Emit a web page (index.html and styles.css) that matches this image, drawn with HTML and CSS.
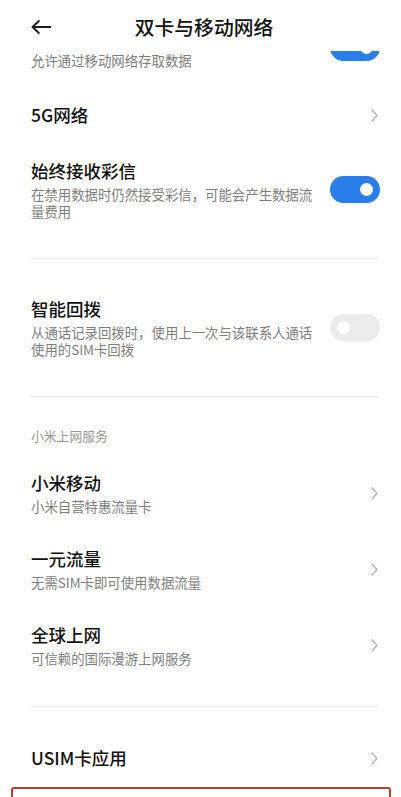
FILE: index.html
```html
<!DOCTYPE html>
<html lang="zh-CN">
<head>
<meta charset="utf-8">
<title>双卡与移动网络</title>
<link rel="stylesheet" href="styles.css">
</head>
<body>
<div class="screen">
  <header class="appbar">
    <span class="back">
      <svg width="20" height="14" viewBox="0 0 20 14" aria-hidden="true"><path d="M1.5 7 H19.5 M7.8 1 L1.5 7 L7.8 13" fill="none" stroke="#1c1c1c" stroke-width="1.9" stroke-linecap="round" stroke-linejoin="round"/></svg>
    </span>
    <h1 class="title">双卡与移动网络</h1>
  </header>
  <main class="list">
    <div class="row row-switch row-first">
      <div class="text"><div class="t">移动数据</div><div class="s">允许通过移动网络存取数据</div></div>
      <span class="switch on"><span class="knob"></span></span>
    </div>
    <div class="row row-nav">
      <div class="text"><div class="t">5G网络</div></div>
      <svg class="chev" width="7" height="13" viewBox="0 0 7 13" aria-hidden="true"><path d="M1 1 L6 6.5 L1 12" fill="none" stroke="#b3b3b3" stroke-width="1.3" stroke-linecap="round" stroke-linejoin="round"/></svg>
    </div>
    <div class="row row-switch">
      <div class="text"><div class="t">始终接收彩信</div><div class="s">在禁用数据时仍然接受彩信，可能会产生数据流<br>量费用</div></div>
      <span class="switch on"><span class="knob"></span></span>
    </div>
    <div class="divider"></div>
    <div class="row row-switch">
      <div class="text"><div class="t">智能回拨</div><div class="s">从通话记录回拨时，使用上一次与该联系人通话<br>使用的SIM卡回拨</div></div>
      <span class="switch off"><span class="knob"></span></span>
    </div>
    <div class="divider"></div>
    <div class="section">小米上网服务</div>
    <div class="row row-nav">
      <div class="text"><div class="t">小米移动</div><div class="s">小米自营特惠流量卡</div></div>
      <svg class="chev" width="7" height="13" viewBox="0 0 7 13" aria-hidden="true"><path d="M1 1 L6 6.5 L1 12" fill="none" stroke="#b3b3b3" stroke-width="1.3" stroke-linecap="round" stroke-linejoin="round"/></svg>
    </div>
    <div class="row row-nav">
      <div class="text"><div class="t">一元流量</div><div class="s">无需SIM卡即可使用数据流量</div></div>
      <svg class="chev" width="7" height="13" viewBox="0 0 7 13" aria-hidden="true"><path d="M1 1 L6 6.5 L1 12" fill="none" stroke="#b3b3b3" stroke-width="1.3" stroke-linecap="round" stroke-linejoin="round"/></svg>
    </div>
    <div class="row row-nav">
      <div class="text"><div class="t">全球上网</div><div class="s">可信赖的国际漫游上网服务</div></div>
      <svg class="chev" width="7" height="13" viewBox="0 0 7 13" aria-hidden="true"><path d="M1 1 L6 6.5 L1 12" fill="none" stroke="#b3b3b3" stroke-width="1.3" stroke-linecap="round" stroke-linejoin="round"/></svg>
    </div>
    <div class="divider divider-b"></div>
    <div class="row row-nav">
      <div class="text"><div class="t">USIM卡应用</div></div>
      <svg class="chev" width="7" height="13" viewBox="0 0 7 13" aria-hidden="true"><path d="M1 1 L6 6.5 L1 12" fill="none" stroke="#b3b3b3" stroke-width="1.3" stroke-linecap="round" stroke-linejoin="round"/></svg>
    </div>
    <div class="highlight"></div>
  </main>
</div>
</body>
</html>
```
FILE: styles.css
```css
* { box-sizing: border-box; }
html, body { margin: 0; padding: 0; background: #fff; }
body {
  font-family: "Noto Sans CJK SC", "Noto Sans", sans-serif;
  color: #111;
}
.screen {
  width: 401px;
  height: 797px;
  overflow: hidden;
  background: #fff;
}
.appbar {
  position: relative;
  z-index: 2;
  height: 51px;
  background: #fff;
  display: flex;
  align-items: center;
  padding-left: 31px;
  padding-top: 3px;
}
.back { display: flex; width: 20px; height: 14px; }
.title {
  flex: 1;
  margin: 0;
  padding-right: 44px;
  text-align: center;
  font-size: 19.8px;
  font-weight: 500;
  line-height: 24px;
  color: #111;
}
.list {
  margin-top: -40px;
}
.row {
  display: flex;
  align-items: center;
  padding: 16px 23px 16px 31px;
}
.row-switch { padding-right: 21px; gap: 11px; }
.row-first { padding-top: 14px; padding-bottom: 18px; }
.text { flex: 1; min-width: 0; }
.t {
  font-size: 17.5px;
  line-height: 24px;
  font-weight: 500;
  color: #111;
}
.s {
  margin-top: 3px;
  font-size: 13.4px;
  line-height: 17px;
  color: #7e7e7e;
  white-space: nowrap;
}
.switch {
  flex: none;
  width: 50px;
  height: 27px;
  border-radius: 14px;
  display: flex;
  align-items: center;
  padding: 0 7px;
}
.switch.on { background: #2a7ee9; justify-content: flex-end; }
.switch.off { background: #ebebeb; justify-content: flex-start; }
.knob {
  width: 13px;
  height: 13px;
  border-radius: 50%;
  background: #fff;
}
.chev { flex: none; display: block; }
.divider {
  height: 1px;
  background: #efefef;
  margin: 22px 23px 22px 31px;
}
.divider-b { margin: 23px 23px 23px 31px; }
.section {
  padding: 8px 31px 11px;
  font-size: 12.8px;
  line-height: 17px;
  color: #999;
}
.highlight {
  margin: 1px 10px 0 11px;
  height: 40px;
  border: 2.5px solid #bf3a2f;
  border-radius: 3px;
}
```
